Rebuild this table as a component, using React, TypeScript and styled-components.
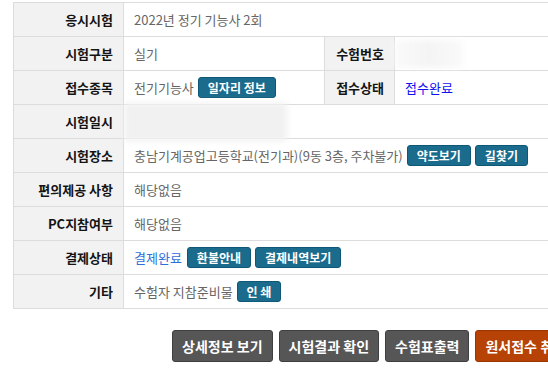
import React from "react";
import styled, { createGlobalStyle } from "styled-components";

const Global = createGlobalStyle`
  html, body { margin: 0; padding: 0; background: #fff; overflow: hidden; }
  body { font-family: "Noto Sans CJK KR", "Noto Sans", sans-serif; }
`;

const Page = styled.div`
  width: 722px;
  padding: 2px 0 0 13px;
`;

const Table = styled.table`
  width: 100%;
  border-collapse: collapse;
  table-layout: fixed;
  border-top: 1px solid #dcdcdc;
`;

const Row = styled.tr`
  height: 34px;
  border-bottom: 1px solid #dcdcdc;
`;

const Label = styled.th`
  background: #f2f2f2;
  border-left: 1px solid #dcdcdc;
  border-right: 1px solid #dcdcdc;
  text-align: right;
  padding: 0 10px 0 0;
  font-size: 13px;
  font-weight: 700;
  color: #141414;
  line-height: 16px;
  white-space: nowrap;
`;

const Value = styled.td`
  position: relative;
  padding: 0 0 0 10px;
  font-size: 13px;
  color: #666;
  line-height: 16px;
  white-space: nowrap;
`;

const Inline = styled.div`
  display: flex;
  align-items: center;
  gap: 4px;
`;

const StatusText = styled.span<{ $tone: "strong" | "soft" }>`
  color: ${(p) => (p.$tone === "strong" ? "#1010f0" : "#2f6fd8")};
  margin-right: ${(p) => (p.$tone === "strong" ? "0" : "1px")};
`;

const SmallButton = styled.button`
  height: 21px;
  padding: 0 9px;
  border: 1px solid #0e5877;
  border-radius: 3px;
  background: #1a6b8c;
  color: #fff;
  font-family: inherit;
  font-size: 12px;
  font-weight: 700;
  line-height: 19px;
  white-space: nowrap;
  cursor: pointer;
`;

const Masked = styled.div<{ $w: number; $h: number; $shade: string }>`
  position: absolute;
  left: 0;
  top: 50%;
  width: ${(p) => p.$w}px;
  height: ${(p) => p.$h}px;
  transform: translateY(-50%);
  background: ${(p) => p.$shade};
  filter: blur(3px);
  pointer-events: none;
`;

const Actions = styled.div`
  display: flex;
  justify-content: center;
  gap: 6px;
  margin-top: 21px;
`;

const ActionButton = styled.button<{ $accent?: boolean }>`
  height: 32px;
  padding: 0 9px;
  border: 1px solid ${(p) => (p.$accent ? "#9a3500" : "#3f3f3f")};
  border-radius: 3px;
  background: ${(p) => (p.$accent ? "#b64205" : "#565656")};
  color: #fff;
  font-family: inherit;
  font-size: 14px;
  font-weight: 700;
  white-space: nowrap;
  cursor: pointer;
`;

export default function App() {
  return (
    <Page>
      <Global />
      <Table>
        <colgroup>
          <col style={{ width: 110 }} />
          <col style={{ width: 201 }} />
          <col style={{ width: 70 }} />
          <col />
        </colgroup>
        <tbody>
          <Row>
            <Label>응시시험</Label>
            <Value colSpan={3}>2022년 정기 기능사 2회</Value>
          </Row>
          <Row>
            <Label>시험구분</Label>
            <Value>실기</Value>
            <Label>수험번호</Label>
            <Value>
              <Masked $w={68} $h={28} $shade="linear-gradient(90deg,#fafafa,#f4f4f4 50%,#fafafa)" />
            </Value>
          </Row>
          <Row>
            <Label>접수종목</Label>
            <Value>
              <Inline>
                전기기능사<SmallButton>일자리 정보</SmallButton>
              </Inline>
            </Value>
            <Label>접수상태</Label>
            <Value>
              <StatusText $tone="strong">접수완료</StatusText>
            </Value>
          </Row>
          <Row>
            <Label>시험일시</Label>
            <Value colSpan={3} style={{ paddingLeft: 0 }}>
              <Masked $w={163} $h={38} $shade="#f1f1f1" />
            </Value>
          </Row>
          <Row>
            <Label>시험장소</Label>
            <Value colSpan={3}>
              <Inline>
                충남기계공업고등학교(전기과)(9동 3층, 주차불가)
                <SmallButton>약도보기</SmallButton>
                <SmallButton>길찾기</SmallButton>
              </Inline>
            </Value>
          </Row>
          <Row>
            <Label>편의제공 사항</Label>
            <Value colSpan={3}>해당없음</Value>
          </Row>
          <Row>
            <Label>PC지참여부</Label>
            <Value colSpan={3}>해당없음</Value>
          </Row>
          <Row>
            <Label>결제상태</Label>
            <Value colSpan={3}>
              <Inline>
                <StatusText $tone="soft">결제완료</StatusText>
                <SmallButton>환불안내</SmallButton>
                <SmallButton>결제내역보기</SmallButton>
              </Inline>
            </Value>
          </Row>
          <Row>
            <Label>기타</Label>
            <Value colSpan={3}>
              <Inline>
                수험자 지참준비물
                <SmallButton>인 쇄</SmallButton>
              </Inline>
            </Value>
          </Row>
        </tbody>
      </Table>
      <Actions>
        <ActionButton>상세정보 보기</ActionButton>
        <ActionButton>시험결과 확인</ActionButton>
        <ActionButton>수험표출력</ActionButton>
        <ActionButton $accent>원서접수 취소</ActionButton>
      </Actions>
    </Page>
  );
}
